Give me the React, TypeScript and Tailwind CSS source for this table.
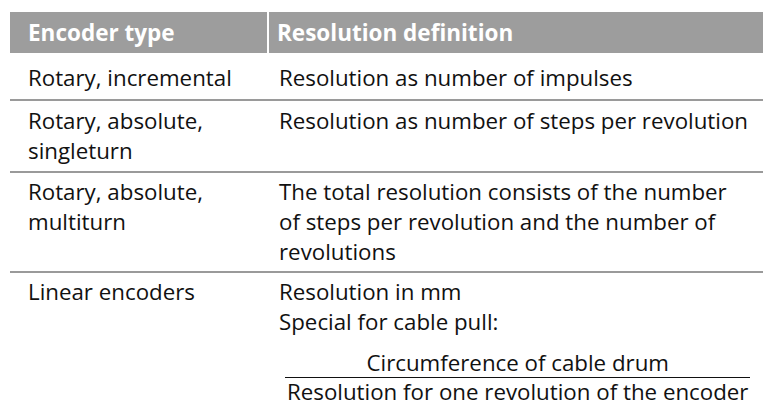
import React from "react";

const font = { fontFamily: '"Open Sans", "Liberation Sans", sans-serif' };

export default function App() {
  return (
    <div className="w-[775px] h-[411px] bg-white overflow-hidden pt-[12px] pl-[10px] text-[#111] text-[22.3px] leading-[30px]" style={font}>
      <div className="w-[753px] grid grid-cols-[259px_494px]">
        <div className="h-[41px] bg-[#9d9d9d] border-r-2 border-white pl-[18px] flex items-center font-bold text-white text-[22.5px]">Encoder type</div>
        <div className="h-[41px] bg-[#9d9d9d] pl-[8px] flex items-center font-bold text-white text-[22.5px]">Resolution definition</div>

        <div className="pl-[18px] pt-[10px] pb-[6px] border-b-2 border-[#9a9a9a]">Rotary, incremental</div>
        <div className="pl-[10px] pt-[10px] pb-[6px] border-b-2 border-[#9a9a9a]">Resolution as number of impulses</div>

        <div className="pl-[18px] pt-[5px] pb-[5px] border-b-2 border-[#9a9a9a]">Rotary, absolute,<br />singleturn</div>
        <div className="pl-[10px] pt-[5px] pb-[5px] border-b-2 border-[#9a9a9a]">Resolution as number of steps per revolution</div>

        <div className="pl-[18px] pt-[4px] pb-[4px] border-b-2 border-[#9a9a9a]">Rotary, absolute,<br />multiturn</div>
        <div className="pl-[10px] pt-[4px] pb-[4px] border-b-2 border-[#9a9a9a]">The total resolution consists of the number<br />of steps per revolution and the number of<br />revolutions</div>

        <div className="pl-[18px] pt-[4px]">Linear encoders</div>
        <div className="pl-[10px] pt-[4px]">
          <div>Resolution in mm</div>
          <div>Special for cable pull:</div>
          <div className="ml-[6px] mt-[11px] inline-flex flex-col items-stretch">
            <div className="text-center px-[2px] border-b border-[#111] leading-[29px]">Circumference of cable drum</div>
            <div className="text-center px-[2px] leading-[28px]">Resolution for one revolution of the encoder</div>
          </div>
        </div>
      </div>
    </div>
  );
}
